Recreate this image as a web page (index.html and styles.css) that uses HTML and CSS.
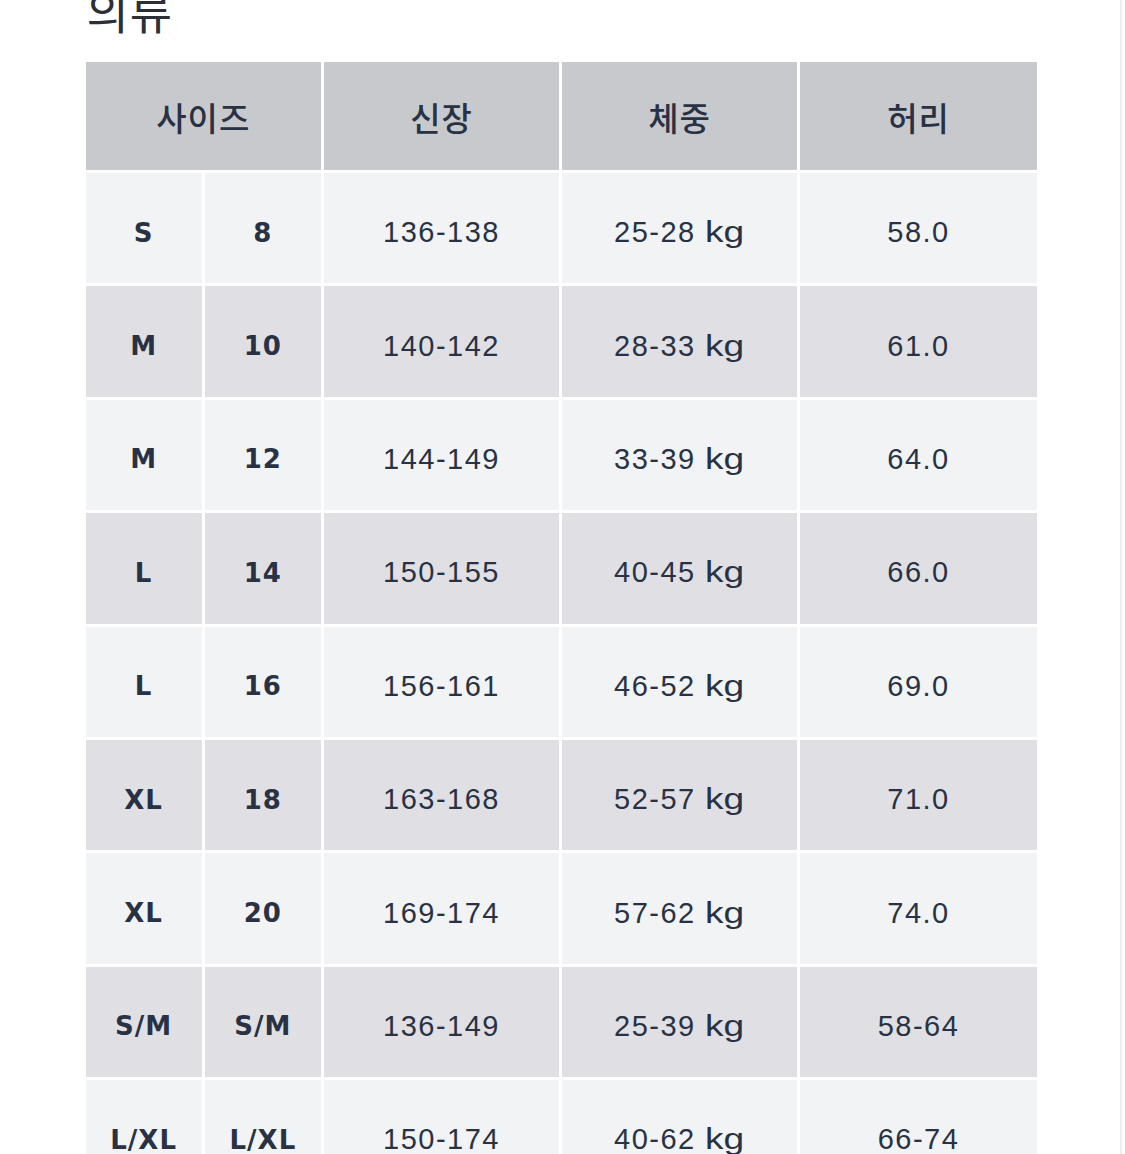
FILE: index.html
```html
<!DOCTYPE html>
<html lang="ko">
<head>
<meta charset="utf-8">
<title>의류 사이즈</title>
<link rel="stylesheet" href="styles.css">
</head>
<body>
<main class="page">
  <h1 class="title">의류</h1>
  <table class="size-table">
    <thead>
      <tr>
        <th colspan="2">사이즈</th>
        <th>신장</th>
        <th>체중</th>
        <th>허리</th>
      </tr>
    </thead>
    <tbody>
      <tr><td class="sz">S</td><td class="sz">8</td><td>136-138</td><td>25-28 <span class="unit">kg</span></td><td>58.0</td></tr>
      <tr><td class="sz">M</td><td class="sz">10</td><td>140-142</td><td>28-33 <span class="unit">kg</span></td><td>61.0</td></tr>
      <tr><td class="sz">M</td><td class="sz">12</td><td>144-149</td><td>33-39 <span class="unit">kg</span></td><td>64.0</td></tr>
      <tr><td class="sz">L</td><td class="sz">14</td><td>150-155</td><td>40-45 <span class="unit">kg</span></td><td>66.0</td></tr>
      <tr><td class="sz">L</td><td class="sz">16</td><td>156-161</td><td>46-52 <span class="unit">kg</span></td><td>69.0</td></tr>
      <tr><td class="sz">XL</td><td class="sz">18</td><td>163-168</td><td>52-57 <span class="unit">kg</span></td><td>71.0</td></tr>
      <tr><td class="sz">XL</td><td class="sz">20</td><td>169-174</td><td>57-62 <span class="unit">kg</span></td><td>74.0</td></tr>
      <tr><td class="sz">S/M</td><td class="sz">S/M</td><td>136-149</td><td>25-39 <span class="unit">kg</span></td><td>58-64</td></tr>
      <tr><td class="sz">L/XL</td><td class="sz">L/XL</td><td>150-174</td><td>40-62 <span class="unit">kg</span></td><td>66-74</td></tr>
    </tbody>
  </table>
</main>
</body>
</html>
```

FILE: styles.css
```css
html, body {
  margin: 0;
  padding: 0;
  background: #ffffff;
  overflow: hidden;
}

.page {
  padding-left: 82.5px;
  height: 1154px;
  overflow: hidden;
  border-right: 2px solid #efefef;
  width: 1122px;
  box-sizing: border-box;
}

.title {
  margin: -16.5px 0 0 4px;
  font-family: "Noto Sans CJK KR", "Noto Sans", sans-serif;
  font-weight: 400;
  font-size: 46px;
  line-height: 50px;
  color: #2b2f36;
  letter-spacing: 1px;
}

.size-table {
  margin-top: 25.5px;
  border-collapse: separate;
  border-spacing: 3.5px 3px;
  table-layout: fixed;
  font-family: "Liberation Sans", Arial, sans-serif;
  color: #283244;
}

.size-table th {
  height: 108px;
  padding: 2px 0 0 0;
  background: #c8c9cd;
  font-family: "Noto Sans CJK KR", "Noto Sans", sans-serif;
  font-weight: 500;
  font-size: 33px;
  letter-spacing: 1px;
  text-align: center;
  vertical-align: middle;
  box-sizing: border-box;
}

.size-table th:nth-child(1) { width: 235.5px; }
.size-table th:nth-child(2),
.size-table th:nth-child(3) { width: 235px; }
.size-table th:nth-child(4) { width: 237px; }

.size-table td {
  height: 110.4px;
  padding: 9px 0 0 0;
  box-sizing: border-box;
  text-align: center;
  vertical-align: middle;
  font-size: 29px;
  letter-spacing: 1.5px;
  background: #f2f3f5;
  white-space: nowrap;
}

.size-table td.sz {
  width: 116px;
  font-family: "DejaVu Sans", "Liberation Sans", sans-serif;
  font-weight: 700;
  font-size: 26px;
  letter-spacing: 1px;
}

.unit {
  display: inline-block;
  margin-left: 0;
  letter-spacing: 0;
  transform: scaleX(1.28);
  transform-origin: left center;
  margin-right: 9px;
}

.size-table tbody tr:nth-child(even) td {
  background: #e0e0e4;
}
```
